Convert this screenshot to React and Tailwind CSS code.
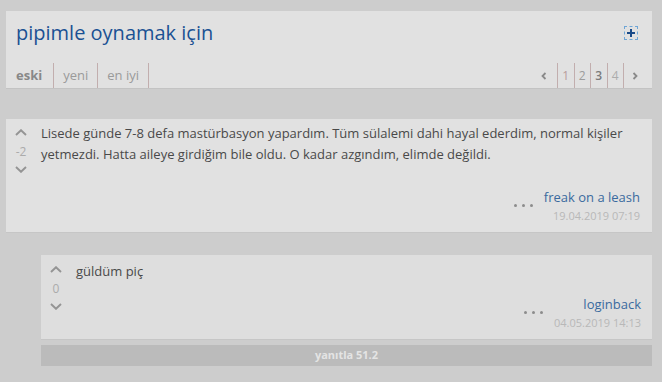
const font = { fontFamily: '"Open Sans", "Noto Sans", sans-serif' };

function Chevron({ up }) {
  return (
    <svg width="12" height="7" viewBox="0 0 12 7" className="block">
      <path
        d={up ? "M1 6 L6 1.2 L11 6" : "M1 1 L6 5.8 L11 1"}
        fill="none"
        stroke="#949494"
        strokeWidth="1.9"
      />
    </svg>
  );
}

function Votes({ score }) {
  return (
    <div className="flex w-[14px] flex-col items-center">
      <Chevron up />
      <div className="mt-[9px] text-[12px] leading-[14px] text-[#ababab]">
        {score}
      </div>
      <div className="mt-[7px]">
        <Chevron />
      </div>
    </div>
  );
}

function Dots() {
  return (
    <div className="flex gap-[5px] pb-[2px]">
      <span className="h-[3px] w-[3px] rounded-full bg-[#8c8c8c]" />
      <span className="h-[3px] w-[3px] rounded-full bg-[#8c8c8c]" />
      <span className="h-[3px] w-[3px] rounded-full bg-[#8c8c8c]" />
    </div>
  );
}

function Footer({ author, date }) {
  return (
    <div className="flex items-center justify-end gap-[11px]">
      <Dots />
      <div className="flex flex-col items-end">
        <span className="text-[13px] leading-[18px] text-[#3a6a9e]">
          {author}
        </span>
        <span className="mt-[2px] text-[11px] leading-[16px] text-[#b8b8b8]">
          {date}
        </span>
      </div>
    </div>
  );
}

function Arrow({ left }) {
  return (
    <svg width="6" height="8" viewBox="0 0 6 8" className="block">
      <path
        d={left ? "M4.5 1 L1.5 4 L4.5 7" : "M1.5 1 L4.5 4 L1.5 7"}
        fill="none"
        stroke="#8a8a8a"
        strokeWidth="1.8"
      />
    </svg>
  );
}

export default function App() {
  const pages = [
    { n: "1", cls: "text-[#b89c9c]" },
    { n: "2", cls: "text-[#9c9c9c]" },
    { n: "3", cls: "text-[#7a7a7a] font-semibold" },
    { n: "4", cls: "text-[#acacac]" },
  ];

  return (
    <div
      className="min-h-[382px] bg-[#cdcdcd] pb-4 pl-[6px] pr-[10px] pt-[11px]"
      style={font}
    >
      <div className="border-b border-[#c3c3c3] bg-[#e1e1e1] pl-[10px] pr-[14px] pt-[8px]">
        <div className="flex items-center justify-between">
          <h1 className="text-[20px] leading-[28px] text-[#1b5193]">
            pipimle oynamak için
          </h1>
          <div className="flex h-[14px] w-[14px] items-center justify-center border border-dashed border-[#6fa6d6]">
            <svg width="8" height="8" viewBox="0 0 8 8">
              <path d="M4 0 V8 M0 4 H8" stroke="#1a4a88" strokeWidth="2" />
            </svg>
          </div>
        </div>
        <div className="mt-[16px] flex h-[25px] items-stretch justify-between text-[13px]">
          <div className="flex">
            <span className="flex items-center border-r border-[#c2aeae] pr-[11px] font-bold text-[#888888]">
              eski
            </span>
            <span className="flex items-center border-r border-[#c2aeae] px-[9px] text-[#9a9a9a]">
              yeni
            </span>
            <span className="flex items-center border-r border-[#c2aeae] px-[9px] text-[#9a9a9a]">
              en iyi
            </span>
          </div>
          <div className="flex text-[12px]">
            <span className="flex items-center pr-[10px]">
              <Arrow left />
            </span>
            {pages.map((p) => (
              <span
                key={p.n}
                className={`flex w-[16.5px] items-center justify-center border-l border-[#c2aeae] ${p.cls}`}
              >
                {p.n}
              </span>
            ))}
            <span className="flex items-center border-l border-[#c2aeae] pl-[8px]">
              <Arrow />
            </span>
          </div>
        </div>
      </div>

      <div className="mt-[30px] flex border-b border-[#c6c6c6] bg-[#e1e1e1] pb-[8px] pl-[8px] pr-[12px] pt-[10px]">
        <Votes score="-2" />
        <div className="ml-[13px] flex-1">
          <p className="-mt-[6px] text-[13px] leading-[21px] text-[#494949]">
            Lisede günde 7-8 defa mastürbasyon yapardım. Tüm sülalemi dahi hayal
            ederdim, normal kişiler yetmezdi. Hatta aileye girdiğim bile oldu. O
            kadar azgındım, elimde değildi.
          </p>
          <div className="mt-[23px]">
            <Footer author="freak on a leash" date="19.04.2019 07:19" />
          </div>
        </div>
      </div>

      <div className="ml-[35px] mt-[22px]">
        <div className="flex border-b border-[#c6c6c6] bg-[#dedede] pb-[8px] pl-[8px] pr-[11px] pt-[11px]">
          <Votes score="0" />
          <div className="ml-[13px] flex-1">
            <p className="-mt-[5px] text-[13px] leading-[21px] text-[#494949]">
              güldüm piç
            </p>
            <div className="mt-[13px]">
              <Footer author="loginback" date="04.05.2019 14:13" />
            </div>
          </div>
        </div>
        <div className="mt-[5px] flex h-[21px] items-center justify-center bg-[#bbbbbb] text-[11px] font-bold text-[#e4e4e4]">
          yanıtla 51.2
        </div>
      </div>
    </div>
  );
}
